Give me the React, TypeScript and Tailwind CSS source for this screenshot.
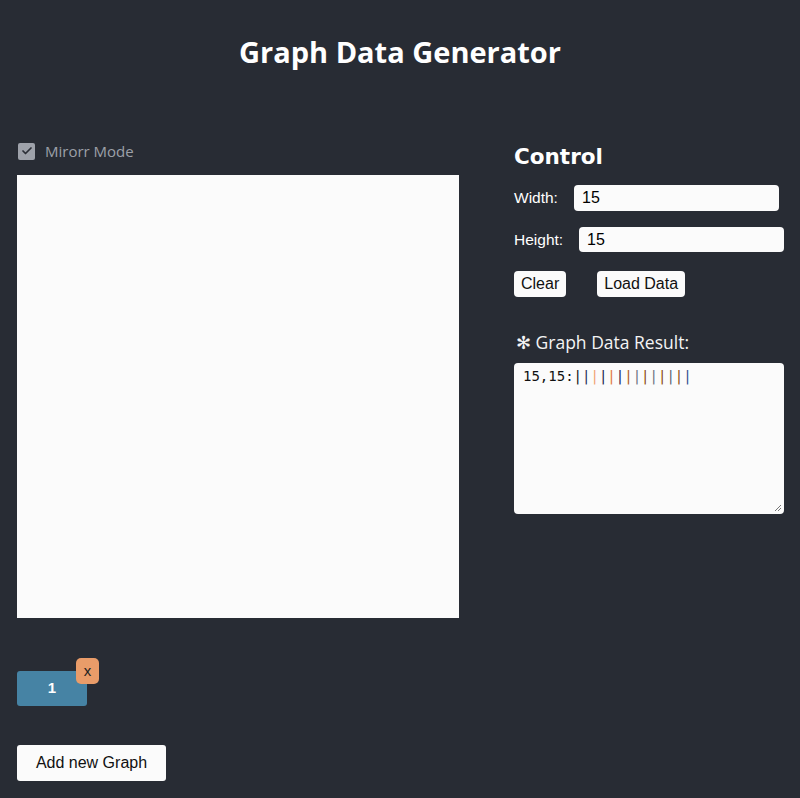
import { Check } from 'lucide-react'

const bars = [
  '#111111',
  '#1e2a5a',
  '#f0a070',
  '#1a2050',
  '#e07a3a',
  '#1a2050',
  '#b05a20',
  '#6b7280',
  '#8a4a10',
  '#6b7280',
  '#8a4a10',
  '#5b6470',
  '#8a4a10',
  '#2a4a90',
]

const sans = "font-['Liberation_Sans',Arial,sans-serif]"

export default function App() {
  return (
    <div className="min-h-[798px] bg-[#282c34] text-white">
      <h1 className="pt-[30px] text-center font-['Open_Sans',sans-serif] text-[29px] font-bold leading-[44px]">
        Graph Data Generator
      </h1>

      <div className="mt-[68px] flex gap-[55px] pl-[17px]">
        {/* Left: canvas */}
        <div className="w-[442px]">
          <label className="flex h-[18px] items-center gap-[10px] pl-px">
            <span className="flex h-[17px] w-[17px] items-center justify-center rounded-[2px] bg-[#9ea2aa]">
              <Check size={12} strokeWidth={3.5} className="text-[#2b2f37]" />
            </span>
            <span className="font-['Open_Sans',sans-serif] text-[15px] text-[#9ca0a8]">Mirorr Mode</span>
          </label>
          <div className="mt-[15px] h-[443px] w-[442px] bg-[#fbfbfb]" />
        </div>

        {/* Right: controls */}
        <div className="w-[270px]">
          <h2 className="mt-[1px] font-['DejaVu_Sans',sans-serif] text-[21.5px] font-bold leading-[28px]">
            Control
          </h2>
          <div className={`mt-[14px] flex items-center ${sans} text-[15.5px]`}>
            <span className="w-[60px]">Width:</span>
            <input
              readOnly
              value="15"
              className="h-[26px] w-[205px] rounded-[4px] bg-[#fbfbfb] px-[8px] text-[16px] text-black outline-none"
            />
          </div>
          <div className={`mt-[16px] flex items-center ${sans} text-[15.5px]`}>
            <span className="w-[65px]">Height:</span>
            <input
              readOnly
              value="15"
              className="h-[25px] w-[205px] rounded-[4px] bg-[#fbfbfb] px-[8px] text-[16px] text-black outline-none"
            />
          </div>
          <div className={`mt-[19px] flex gap-[31px] ${sans} text-[16px]`}>
            <button className="h-[26px] rounded-[4px] bg-[#fbfbfb] px-[7px] text-[#111]">Clear</button>
            <button className="h-[26px] rounded-[4px] bg-[#fbfbfb] px-[7px] text-[#111]">Load Data</button>
          </div>

          <p className="mt-[33px] pl-[2px] font-['Open_Sans',sans-serif] text-[17.5px] leading-[24px] text-[#f4f4f4]">
            ✻ Graph Data Result:
          </p>
          <div className="relative mt-[9px] h-[151px] w-[270px] rounded-[4px] bg-[#fbfbfb] px-[9px] pt-[4px]">
            <div className="font-['DejaVu_Sans_Mono',monospace] text-[14px] leading-[18px] text-[#111]">
              15,15:
              {bars.map((c, i) => (
                <span key={i} style={{ color: c }}>
                  |
                </span>
              ))}
            </div>
            <svg className="absolute bottom-[2px] right-[2px]" width="9" height="9" viewBox="0 0 9 9">
              <path d="M8 2L2 8M8 5L5 8" stroke="#777" strokeWidth="1" />
            </svg>
          </div>
        </div>
      </div>

      {/* Graph tabs */}
      <div className="mt-[40px] pl-[17px]">
        <div className="relative inline-block pt-[13px]">
          <div className={`flex h-[35px] w-[70px] items-center justify-center rounded-[3px] bg-[#4683a4] ${sans} text-[15px] font-bold`}>
            1
          </div>
          <span className={`absolute right-[-12px] top-0 flex h-[26px] w-[23px] items-center justify-center rounded-[5px] bg-[#e99c69] ${sans} text-[15px] text-[#222]`}>
            x
          </span>
        </div>
      </div>

      <div className="mt-[39px] pl-[17px]">
        <button className={`h-[36px] w-[149px] rounded-[3px] bg-[#fbfbfb] ${sans} text-[16px] text-[#111]`}>
          Add new Graph
        </button>
      </div>
    </div>
  )
}
